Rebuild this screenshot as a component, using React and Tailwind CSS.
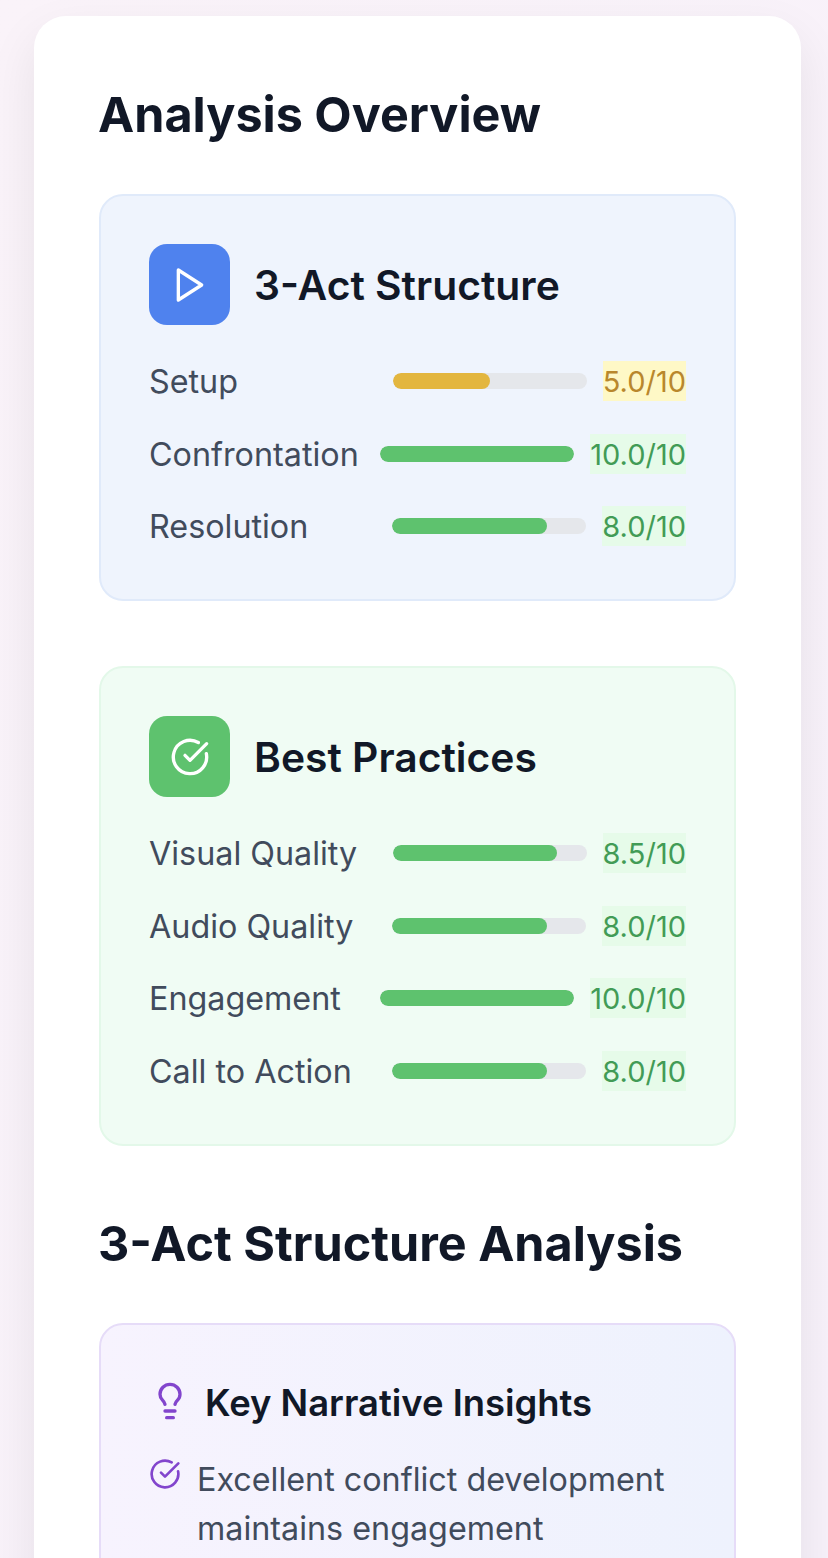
import React from 'react';
import { Lightbulb } from 'lucide-react';

const font = { fontFamily: 'Inter, "Noto Sans", sans-serif' };

const PlayIcon = () => (
  <svg width="40" height="40" viewBox="0 0 24 24" fill="none" stroke="white" strokeWidth="2" strokeLinecap="round" strokeLinejoin="round">
    <polygon points="5 3 19 12 5 21 5 3" />
  </svg>
);

const CheckIcon = ({ size = 40, color = 'white' }) => (
  <svg width={size} height={size} viewBox="0 0 24 24" fill="none" stroke={color} strokeWidth="2" strokeLinecap="round" strokeLinejoin="round">
    <path d="M21.801 10A10 10 0 1 1 17 3.335" />
    <path d="m9 11 3 3L22 4" />
  </svg>
);

const Row = ({ label, value, max = '10', tone = 'green' }) => {
  const pct = (parseFloat(value) / 10) * 100;
  return (
    <div className="flex items-center justify-between h-10">
      <span className="text-[32.3px] h-10 leading-[42px] text-[#414b5c]">{label}</span>
      <div className="flex items-center gap-4">
        <div className="w-[194px] h-4 rounded-full bg-[#e5e7eb] overflow-hidden">
          <div
            className={tone === 'green' ? 'h-full rounded-full bg-[#5ec26e]' : 'h-full rounded-full bg-[#e3b63f]'}
            style={{ width: `${pct}%` }}
          />
        </div>
        <span
          className={
            tone === 'green'
              ? 'text-[29px] h-10 leading-[42px] bg-[#e6fbe9] text-[#429b56]'
              : 'text-[29px] h-10 leading-[42px] bg-[#fef8c6] text-[#b9872c]'
          }
        >
          {value}/{max}
        </span>
      </div>
    </div>
  );
};

const ScoreCard = ({ className, iconBg, icon, title, children }) => (
  <div className={`rounded-3xl border-2 px-12 pt-[48px] pb-[53px] ${className}`}>
    <div className="flex items-center gap-6 mb-9">
      <div className={`w-[81px] h-[81px] rounded-[18px] flex items-center justify-center ${iconBg}`}>{icon}</div>
      <h3 className="text-[40.8px] leading-[48px] font-semibold text-[#111827]">{title}</h3>
    </div>
    <div className="flex flex-col gap-[32.5px]">{children}</div>
  </div>
);

export default function App() {
  return (
    <div style={font} className="h-[1558px] overflow-hidden bg-gradient-to-br from-[#faf3f9] to-[#f7f1fa] pl-[34px] pr-[27px] pt-4">
      <div className="bg-white rounded-t-[32px] h-[1600px] px-[65px] pt-[64px] shadow-[0_20px_50px_rgba(0,0,0,0.08)]">
        <h2 className="text-[48.5px] leading-[70px] font-bold text-[#111827] mb-[44px] -ml-px">Analysis Overview</h2>

        <ScoreCard
          className="bg-[#eff4fd] border-[#e0eafa] mb-[65px]"
          iconBg="bg-[#4f82ee]"
          icon={<PlayIcon />}
          title="3-Act Structure"
        >
          <Row label="Setup" value="5.0" tone="yellow" />
          <Row label="Confrontation" value="10.0" />
          <Row label="Resolution" value="8.0" />
        </ScoreCard>

        <ScoreCard
          className="bg-[#f0fcf4] border-[#e3f8e9]"
          iconBg="bg-[#5ec26e]"
          icon={<CheckIcon />}
          title="Best Practices"
        >
          <Row label="Visual Quality" value="8.5" />
          <Row label="Audio Quality" value="8.0" />
          <Row label="Engagement" value="10.0" />
          <Row label="Call to Action" value="8.0" />
        </ScoreCard>

        <h2 className="text-[48.5px] leading-[64px] font-bold text-[#111827] mt-[66px] mb-[47px] -ml-px">3-Act Structure Analysis</h2>

        <div className="rounded-3xl border-2 border-[#e6dcf8] bg-gradient-to-r from-[#f7f3fe] to-[#eef2fd] pl-12 pt-[54px] h-[400px]">
          <div className="flex items-center gap-4 mb-[28px]">
            <Lightbulb size={40} color="#8245cd" strokeWidth={2} className="relative left-px -top-[2px]" />
            <h4 className="text-[36.4px] leading-[48px] font-semibold text-[#111827]">Key Narrative Insights</h4>
          </div>
          <div className="flex gap-4">
            <div className="shrink-0 pt-[3px]">
              <CheckIcon size={32} color="#8245cd" />
            </div>
            <p className="text-[32.3px] leading-[49.5px] text-[#414b5c] w-[480px]">Excellent conflict development maintains engagement</p>
          </div>
        </div>
      </div>
    </div>
  );
}
